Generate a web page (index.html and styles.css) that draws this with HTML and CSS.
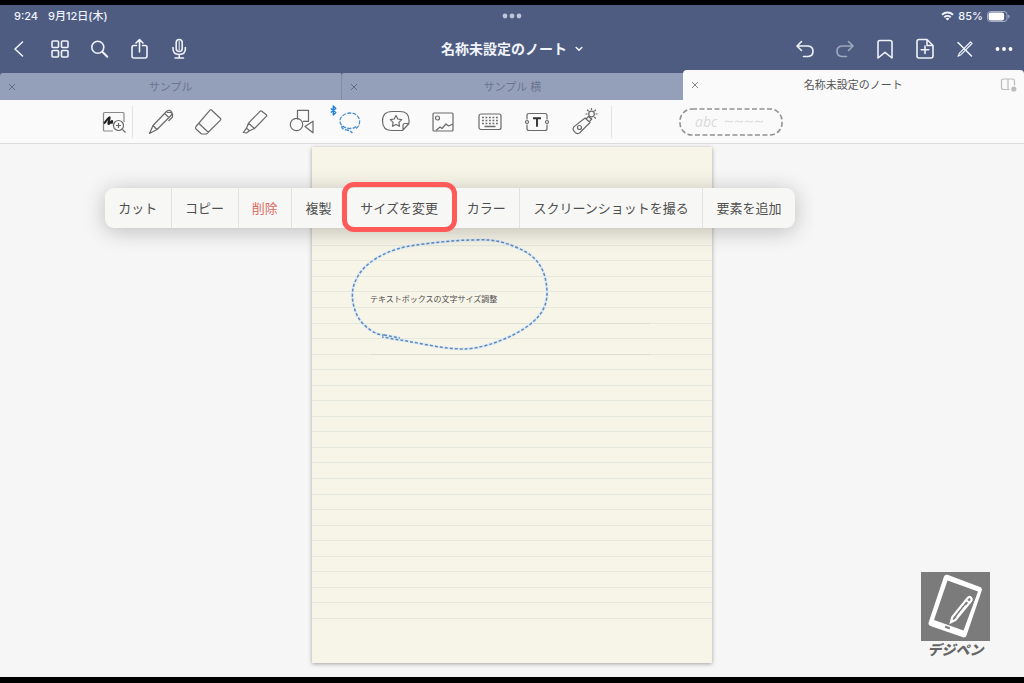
FILE: index.html
```html
<!DOCTYPE html>
<html lang="ja">
<head>
<meta charset="utf-8">
<meta name="viewport" content="width=device-width, initial-scale=1">
<title>名称未設定のノート</title>
<link rel="stylesheet" href="styles.css">
</head>
<body>
<header class="header">
  <div class="status">
    <div class="status-left"><span>9:24</span><span>9月12日(木)</span></div>
    <svg class="multitask" width="20" height="6" viewBox="0 0 20 6" fill="#bcc5da"><circle cx="3" cy="3" r="2.4"/><circle cx="10" cy="3" r="2.4"/><circle cx="17" cy="3" r="2.4"/></svg>
    <div class="status-right">
      <svg width="13" height="10" viewBox="0 0 13 10" fill="none" stroke="#eef2fa" stroke-width="2"><path d="M1 3.8a8 8 0 0 1 11 0M3.3 6.2a4.8 4.8 0 0 1 6.4 0"/><path d="M6.5 9.6 4.6 7.7a2.8 2.8 0 0 1 3.8 0z" fill="#eef2fa" stroke="none"/></svg>
      <span>85%</span>
      <svg width="23" height="11" viewBox="0 0 23 11"><rect x=".5" y=".5" width="19.500" height="10" rx="3" fill="none" stroke="#a5afc8"/><rect x="1.600" y="1.600" width="15.500" height="7.800" rx="2" fill="#fff"/><path d="M21.200 3.500q1.400.6 1.400 2t-1.400 2z" fill="#a5afc8"/></svg>
    </div>
  </div>
  <nav class="nav">
    <div class="nav-group">
      <button class="icon-btn" aria-label="戻る"><svg width="24" height="24" viewBox="0 0 24 24"><path d="M14.500 5 7 12l7.500 7"/></svg></button>
      <button class="icon-btn" aria-label="一覧"><svg width="24" height="24" viewBox="0 0 24 24"><rect x="4" y="4" width="6.500" height="6.500" rx="1"/><rect x="13.500" y="4" width="6.500" height="6.500" rx="1"/><rect x="4" y="13.500" width="6.500" height="6.500" rx="1"/><rect x="13.500" y="13.500" width="6.500" height="6.500" rx="1"/></svg></button>
      <button class="icon-btn" aria-label="検索"><svg width="24" height="24" viewBox="0 0 24 24"><circle cx="9.800" cy="10.300" r="6"/><path d="m14.300 14.800 5 5" stroke-width="2"/></svg></button>
      <button class="icon-btn" aria-label="共有"><svg width="24" height="24" viewBox="0 0 24 24"><path d="M8.500 8.500H6q-2 0-2 2V19q0 2 2 2h11q2 0 2-2v-8.500q0-2-2-2h-2.500M11.500 15V2.800M8 6l3.500-3.400L15 6"/></svg></button>
      <button class="icon-btn" aria-label="録音"><svg width="24" height="24" viewBox="0 0 24 24"><rect x="8.200" y="2.500" width="6" height="12" rx="3"/><path d="M11.200 4v9" stroke-width="1"/><path d="M5 10.500v1q0 6 6.200 6t6.200-6v-1M11.200 17.500V21M7 21h8.500"/></svg></button>
    </div>
    <button class="note-title"><span>名称未設定のノート</span><svg width="8" height="6" viewBox="0 0 8 6"><path d="m1.200 1.500 2.800 2.800 2.800-2.800"/></svg></button>
    <div class="nav-group">
      <button class="icon-btn" aria-label="取り消す"><svg width="24" height="24" viewBox="0 0 24 24"><path d="M9.500 4.500 5 9l4.500 4.500M5 9h11q5 .3 5 5.300t-5 5.200h-4.500"/></svg></button>
      <button class="icon-btn dim" aria-label="やり直す"><svg width="24" height="24" viewBox="0 0 24 24"><path d="M16.500 4.500 21 9l-4.500 4.500M21 9H10q-5 .3-5 5.300t5 5.200h4.500"/></svg></button>
      <button class="icon-btn" aria-label="ブックマーク"><svg width="24" height="24" viewBox="0 0 24 24"><path d="M6 21V5.500q0-2 2-2h10q2 0 2 2V21l-7-5.700z"/></svg></button>
      <button class="icon-btn" aria-label="ページを追加"><svg width="24" height="24" viewBox="0 0 24 24"><path d="M15 2.500H7q-2 0-2 2V19q0 2 2 2h12q2 0 2-2V8.500zM15 2.500v6h6M13 9v7.500M9.200 12.700h7.600"/></svg></button>
      <button class="icon-btn" aria-label="編集を終了"><svg width="24" height="24" viewBox="0 0 24 24"><path d="m6 5.500 13.500 13.500"/><path d="m18.500 5-11 11.200-1.500 3 3-1.500L20 6.500z" stroke-width="1.200"/></svg></button>
      <button class="icon-btn" aria-label="その他"><svg width="24" height="24" viewBox="0 0 24 24"><g fill="#fff" stroke="none"><circle cx="5.500" cy="12" r="1.900"/><circle cx="12" cy="12" r="1.900"/><circle cx="18.500" cy="12" r="1.900"/></g></svg></button>
    </div>
  </nav>
  <div class="tabs">
    <div class="tab"><button class="tab-close" aria-label="閉じる"><svg width="8" height="8" viewBox="0 0 8 8"><path d="m1 1 6 6M7 1 1 7"/></svg></button><span>サンプル</span></div>
    <div class="tab"><button class="tab-close" aria-label="閉じる"><svg width="8" height="8" viewBox="0 0 8 8"><path d="m1 1 6 6M7 1 1 7"/></svg></button><span>サンプル 横</span></div>
    <div class="tab active"><button class="tab-close" aria-label="閉じる"><svg width="8" height="8" viewBox="0 0 8 8"><path d="m1 1 6 6M7 1 1 7"/></svg></button><span>名称未設定のノート</span>
      <button class="split" aria-label="分割表示"><svg width="18" height="16" viewBox="0 0 18 16"><path d="M9.500 12.500H3.500q-2 0-2-2V4q0-2 2-2h9q2 0 2 2v4.500M8 2v10.500"/><circle cx="13.800" cy="12" r="2.600" fill="#bbb" stroke="none"/></svg></button></div>
  </div>
</header>

<div class="toolbar">
  <button class="tool zoom-tool" aria-label="拡大ウインドウ"><svg width="32" height="32" viewBox="0 0 32 32"><path d="M26 16V7.500q0-1-1-1H6.500q-1 0-1 1V24q0 1 1 1H15" stroke="#888"/><path d="M6 17.500c3-3 4.500-6.500 5.500-6.300 1.200.5-2.200 6.500-.8 6.800 1.200 0 2.300-3.300 3.300-3 .7.300-.6 2 .6 2.500" stroke="#222" stroke-width="2"/><circle cx="20.500" cy="19.500" r="5" fill="#fafafa"/><path d="m24.300 23.300 3.200 3.200M20.500 17v5M18 19.500h5"/></svg></button>
  <span class="divider"></span>
  <div class="tools">
    <button class="tool" aria-label="ペン"><svg width="32" height="32" viewBox="0 0 32 32"><path d="M21.500 5.500 8 19.500 4.500 27.500l7.500-4L26 9.500M8 19.500l4 4M19.500 7.500l4.500 4M21.500 5.500q2.500-2.200 4.500-.3t0 4.300M22 6.500h4l1.500 1.500v3l-4 4"/></svg></button>
    <button class="tool" aria-label="消しゴム"><svg width="32" height="32" viewBox="0 0 32 32"><path d="m19.500 4 9 8.500q.8.800 0 1.600L15 27.500q-.5.500-1.200.5H9.500L4 23q-1-1 0-2.500L18 4.200q.8-.8 1.500-.2zM7 17.500l9.500 9"/></svg></button>
    <button class="tool" aria-label="蛍光ペン"><svg width="32" height="32" viewBox="0 0 32 32"><path d="m22.500 5 4.800 3.800q.8.700 0 1.600L15.500 22.500l-6-5.300L21 5.300q.8-.8 1.500-.3zM9.500 17.200l-2 5 3 2.600 5-2.300M7.500 22.200l-3.200 4.300 3.200.5 3-2.200"/></svg></button>
    <button class="tool" aria-label="図形"><svg width="32" height="32" viewBox="0 0 32 32"><path d="M11.500 13.500V4.300h11v11H17M19 20.500l8-5.300v11.600z"/><circle cx="10.500" cy="18.500" r="6.200"/></svg></button>
    <button class="tool" aria-label="なげなわ"><svg width="38" height="38" viewBox="0 0 38 38"><path d="M26 25.500c3-2 4-5 3.500-8.500-.8-4.500-5-7.300-10-7-5.500.5-10 4-9.500 8.500.5 4.500 5 7 10 7 2.500 0 4.500-.5 6-2M12 23c-1 2.500 2 3.500 5 4 2.500.5 4 1.500 5.500 3" stroke="#4a8fce" stroke-width="1.300" stroke-dasharray="4 1.300"/><path d="m.8 5.500 5 4L3.300 12V3l2.500 2.500-5 4" stroke="#207fdc" stroke-width="1.400"/></svg></button>
    <button class="tool" aria-label="ステッカー"><svg width="32" height="32" viewBox="0 0 32 32"><path d="M29 17.500v-3q0-9-9-9h-8q-9.500 0-9.500 9.500t9.500 9.500h10.500l6.500-7M23 24.500v-5q0-2 2-2h4"/><path d="m16 9.500 1.800 3.500 3.900.6-2.800 2.800.6 3.900-3.500-1.800-3.500 1.800.6-3.900-2.800-2.800 3.900-.6z"/></svg></button>
    <button class="tool" aria-label="画像"><svg width="32" height="32" viewBox="0 0 32 32"><rect x="6" y="7" width="20" height="18" rx="1"/><circle cx="10.500" cy="12" r="2"/><path d="m9 24.500 4-3.500 2 1.500 4-4.500 2.500 2 4.500-2"/></svg></button>
    <button class="tool" aria-label="キーボード"><svg width="32" height="32" viewBox="0 0 32 32"><rect x="5" y="8" width="22" height="15.500" rx="2"/><path d="M8 11.500h16M8 14.500h16M8 17.500h16" stroke-width="1.700" stroke-dasharray="1.800 1.700"/><path d="M10.500 20.500h11" stroke-width="1.500"/></svg></button>
    <button class="tool" aria-label="テキスト"><svg width="32" height="32" viewBox="0 0 32 32"><path d="M6 13.500v-4q0-2 2-2h16q2 0 2 2v4M6 18.500v4q0 2 2 2h16q2 0 2-2v-4"/><circle cx="6" cy="16" r="1.500"/><circle cx="26" cy="16" r="1.500"/><path d="M12 12.300h8M16 12.300v8.500" stroke="#333" stroke-width="1.900"/></svg></button>
    <button class="tool" aria-label="レーザーポインター"><svg width="32" height="32" viewBox="0 0 32 32"><path d="m17 12 5 4.500L11.500 27q-2 1.500-4-.3l-1.700-1.800q-1.500-2 0-4zM18 13l2.500-2.500 3 2.800-2.500 2.700"/><circle cx="11.500" cy="21.500" r="2"/><circle cx="23.500" cy="8" r="2.800"/><path d="M23.500 4V2M23.500 12v2M19.500 8h-2M27.500 8h2M20.700 5.200 19 3.700M26.300 5.200 28 3.700M26.300 11l1.500 1.500"/></svg></button>
  </div>
  <span class="divider"></span>
  <button class="lasso-style" aria-label="なげなわの対象"><svg width="106" height="30" viewBox="0 0 106 30"><rect x="2" y="2" width="102" height="26" rx="12" stroke="#929292" stroke-width="1.600" stroke-dasharray="5 2.500"/><path d="M47 15q2-1.500 4-.5t4-.5M57 15q2-1.500 4-.5t4-.5M67 15q2-1.500 4-.5t4-.5M77 15q2-1.500 4-.5t4-.5" stroke="#ddd"/></svg><span>abc</span></button>
</div>

<main class="canvas">
  <article class="paper">
    <svg class="ruling" viewBox="0 0 400 516" aria-hidden="true">
      <g transform="translate(-312 -147)" fill="none">
        <path d="M312 245.500h400M312 260.500h400M312 276.500h400M312 291.500h400M312 307.500h400M312 323.500h400M312 338.500h400M312 354.500h400M312 369.500h400M312 385.500h400M312 400.500h400M312 416.500h400M312 431.500h400M312 447.500h400M312 462.500h400M312 478.500h400M312 494.500h400M312 509.500h400M312 525.500h400M312 540.500h400M312 556.500h400M312 571.500h400M312 587.500h400M312 602.500h400M312 618.500h400" stroke="#e5e8de"/>
        <path d="M370 323.500h280M370 354.500h280" stroke="#dcded3"/>
        <path d="M385 335C376 336 363 326 358 317C352 306 350 291 356 280C363 263 386 250 410 246C430 243 453 240 475 240C494 239 504 242 518 248C537 256 546 269 547 291C548 313 532 325 513 335C497 343 478 349 463 349C443 349 420 343 400 340L382 337M384 335l16 3" stroke="#deedf3" stroke-width="3"/>
        <path d="M385 335C376 336 363 326 358 317C352 306 350 291 356 280C363 263 386 250 410 246C430 243 453 240 475 240C494 239 504 242 518 248C537 256 546 269 547 291C548 313 532 325 513 335C497 343 478 349 463 349C443 349 420 343 400 340L382 337M384 335l16 3" stroke="#6288bd" stroke-width="1.500" stroke-dasharray="3 2"/>
      </g>
    </svg>
    <p class="note-text">テキストボックスの文字サイズ調整</p>
  </article>

  <div class="menu" role="menu">
    <button role="menuitem">カット</button>
    <button role="menuitem">コピー</button>
    <button role="menuitem" class="danger">削除</button>
    <button role="menuitem">複製</button>
    <button role="menuitem" class="marked">サイズを変更</button>
    <button role="menuitem">カラー</button>
    <button role="menuitem">スクリーンショットを撮る</button>
    <button role="menuitem">要素を追加</button>
  </div>

  <div class="brand">
    <svg width="69" height="69" viewBox="0 0 69 69"><rect width="69" height="69" fill="#7b7b7b"/><path fill="#fff" fill-rule="evenodd" d="M26.500 2.800 59 15q2.500 1 1.800 3.500L45.500 63.500q-1 2.500-3.500 1.700L9.500 54q-2.700-1-1.800-3.700L23 4.500q1-2.400 3.500-1.700zM26.500 8.500 13 48l29.500 10.500L57 19.500z"/><path d="m25 55 3 1" stroke="#7b7b7b" stroke-width="2.200" stroke-linecap="round"/><path d="m46.500 26.300-15.300 19-1.200 5 4.500-2.300L50 29q1.500-2-.2-3.500t-3.300.8z" fill="none" stroke="#fff" stroke-width="2.200"/><path d="m45 28 3.800 3M45 33.500l-9 11.500" stroke="#fff" stroke-width="1.800"/></svg>
    <span>デジペン</span>
  </div>
</main>
</body>
</html>
```
FILE: styles.css
```css
* { box-sizing: border-box; }

body {
  margin: 0;
  min-height: 100vh;
  display: flex;
  flex-direction: column;
  border-top: 5px solid #000;
  border-bottom: 6px solid #000;
  background: #f6f6f7;
  color: #505050;
  font-family: Inter, "Noto Sans CJK JP", sans-serif;
  font-size: 13px;
}

button {
  border: 0;
  padding: 0;
  background: none;
  color: inherit;
  font: inherit;
}

svg { display: block; flex: none; }

.header { background: #4e5c82; color: #f1f4fa; }

.status {
  display: grid;
  grid-template-columns: 1fr auto 1fr;
  align-items: center;
  height: 22px;
  padding: 0 14px;
  font-size: 11px;
  font-weight: 500;
  line-height: 16px;
}
.status-left { display: flex; align-items: baseline; gap: 10px; }
.status-right {
  display: flex;
  justify-content: flex-end;
  align-items: center;
  gap: 4px;
}

.nav {
  display: grid;
  grid-template-columns: 1fr auto 1fr;
  align-items: center;
  height: 43px;
}
.nav-group { display: flex; }
.nav-group:last-child { justify-content: flex-end; }
.icon-btn {
  display: flex;
  justify-content: center;
  width: 40px;
}
.icon-btn svg, .note-title svg {
  fill: none;
  stroke: #eef2f8;
  stroke-width: 1.6;
  stroke-linecap: round;
  stroke-linejoin: round;
}
.icon-btn.dim { opacity: 0.5; }
.note-title {
  display: flex;
  align-items: center;
  gap: 8px;
  font-size: 14px;
  font-weight: 700;
}
.note-title span { padding-bottom: 2px; }

.tabs {
  display: grid;
  grid-template-columns: repeat(3, 1fr);
  align-items: end;
  height: 30px;
}
.tab {
  display: grid;
  grid-template-columns: 24px 1fr 24px;
  align-items: center;
  height: 27px;
  border-left: 1px solid #7f8bab;
  border-radius: 3px 0 0 0;
  background: #949fba;
  color: #6b7590;
  font-size: 11px;
  text-align: center;
}
.tab span { padding-bottom: 2px; }
.tab:first-child { border-left: 0; }
.tab.active {
  height: 30px;
  border-left: 0;
  border-radius: 4px 4px 0 0;
  background: #fafafa;
  color: #555;
}
.tab-close { display: flex; justify-content: center; }
.tab-close svg { fill: none; stroke: #626c87; }
.active .tab-close svg { stroke: #888; }
.split svg { fill: none; stroke: #bbb; stroke-width: 1.2; }

.toolbar {
  display: flex;
  align-items: center;
  height: 44px;
  padding-left: 96px;
  border-bottom: 1px solid #dcdcdc;
  background: #fafafa;
}
.tools { display: flex; align-items: center; margin: 0 4px; }
.tool {
  display: flex;
  justify-content: center;
  width: 47px;
}
.zoom-tool { width: 36px; }
.tool svg, .lasso-style svg {
  fill: none;
  stroke: #6a6a6a;
  stroke-width: 1.2;
  stroke-linejoin: round;
}
.divider { width: 1px; height: 32px; background: #e3e3e3; }
.lasso-style { position: relative; margin-left: 66px; }
.lasso-style span {
  position: absolute;
  left: 17px;
  top: 5px;
  color: #dadada;
  font-family: "Open Sans", sans-serif;
  font-size: 14px;
  font-style: italic;
}

.canvas {
  position: relative;
  flex: 1;
  padding: 3px 0 14px;
}
.paper {
  position: relative;
  width: 100%;
  max-width: 400px;
  margin: 0 auto;
  background: #f7f4e8;
  box-shadow: 0 1px 4px rgba(0, 0, 0, 0.35);
}
.ruling { width: 100%; }
.note-text {
  position: absolute;
  left: 58px;
  top: 146px;
  margin: 0;
  font-size: 8px;
  line-height: 12px;
  white-space: nowrap;
}

.menu {
  position: absolute;
  left: 105px;
  top: 44px;
  display: flex;
  width: 690px;
  height: 40px;
  border-radius: 9px;
  background: #f7f7f5;
  box-shadow: 0 3px 22px rgba(0, 0, 0, 0.24);
}
.menu button {
  position: relative;
  flex: 1 0 auto;
  padding: 0 13px 2px;
  border-right: 1px solid #e2e2e0;
  white-space: nowrap;
}
.menu button:last-child { border-right: 0; }
.menu .danger { color: #dc6a62; }
.menu .marked { padding: 0 14px 2px; }
.menu .marked::after {
  content: "";
  position: absolute;
  inset: -6px -5px -4px -4px;
  border: 5px solid #ff5959;
  border-radius: 12px;
}

.brand {
  position: absolute;
  right: 34px;
  bottom: 18px;
  display: flex;
  flex-direction: column;
  align-items: center;
  color: #666;
  font-size: 14px;
  font-weight: 900;
  font-style: italic;
  line-height: 18px;
}
```
